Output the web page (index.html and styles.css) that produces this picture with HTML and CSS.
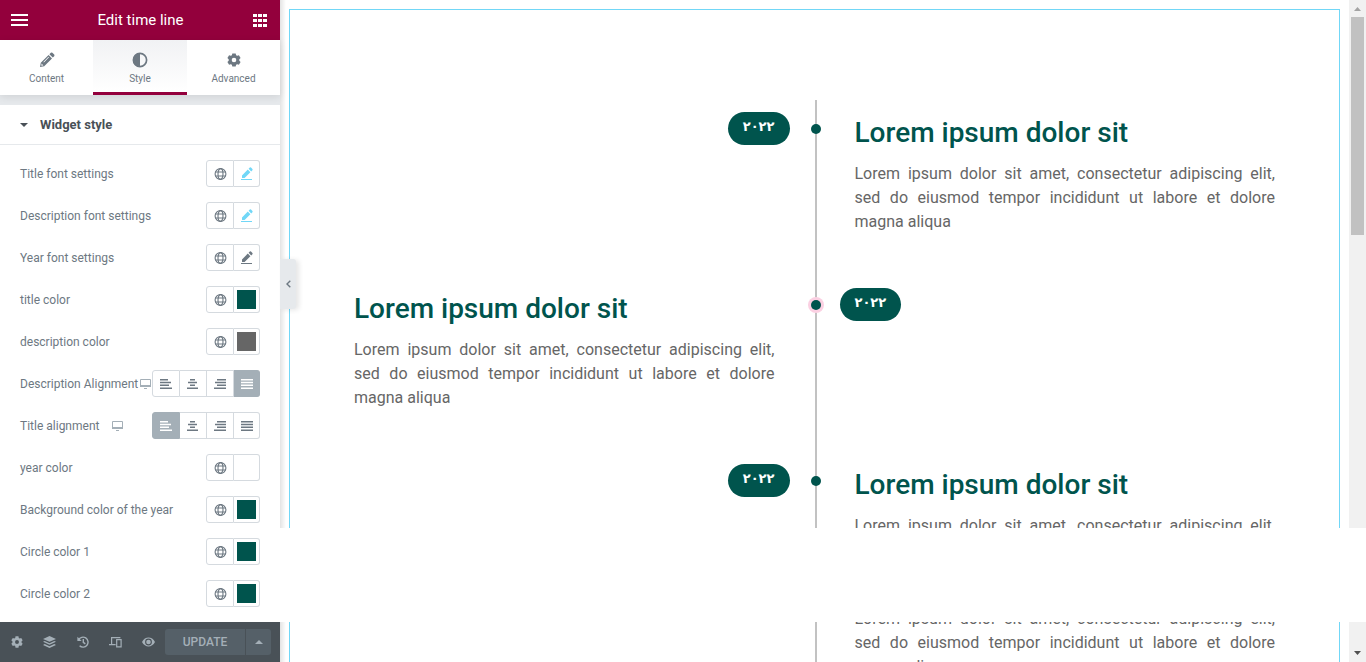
FILE: index.html
```html
<!DOCTYPE html>
<html lang="en">
<head>
<meta charset="utf-8">
<title>Edit time line</title>
<link rel="stylesheet" href="styles.css">
</head>
<body>
<svg class="sprite" aria-hidden="true">
  <symbol id="globe" viewBox="0 0 13 12"><g fill="none" stroke="currentColor" stroke-width="1.100"><circle cx="6.500" cy="6" r="5.400"/><ellipse cx="6.500" cy="6" rx="2.500" ry="5.400"/><path d="M1.300 4h10.400M1.300 8h10.400"/></g></symbol>
  <symbol id="edit" viewBox="0 0 12 14"><path fill="currentColor" d="M1 11V8.400L6.800 2.600 9.400 5.200 3.600 11zM7.600 1.800 8.800.6q.6-.5 1.200 0L11.400 2q.5.600 0 1.200L10.200 4.400zM0 12h11v1H0z"/></symbol>
  <symbol id="screen" viewBox="0 0 13 11"><path fill="none" stroke="currentColor" d="M1.500 1.500h10v6h-10z"/><path fill="currentColor" d="M1 7h11v2H1zM5 10h3v1H5z"/></symbol>
  <symbol id="left" viewBox="0 0 12 10"><path fill="currentColor" d="M0 0h8v1.400H0zM0 2.800h11v1.400H0zM0 5.600h9v1.400H0zM0 8.500h12v1.400H0z"/></symbol>
  <symbol id="center" viewBox="0 0 12 10"><path fill="currentColor" d="M3 0h5v1.400H3zM1 2.800h9v1.400H1zM3 5.600h5v1.400H3zM0 8.500h11v1.400H0z"/></symbol>
  <symbol id="right" viewBox="0 0 12 10"><path fill="currentColor" d="M3 0h9v1.400H3zM1 2.800h11v1.400H1zM3 5.600h9v1.400H3zM0 8.500h12v1.400H0z"/></symbol>
  <symbol id="justify" viewBox="0 0 12 10"><path fill="currentColor" d="M0 0h12v1.400H0zM0 2.800h12v1.400H0zM0 5.600h12v1.400H0zM0 8.500h12v1.400H0z"/></symbol>
  <symbol id="gear" viewBox="0 0 14 14"><path fill="currentColor" fill-rule="evenodd" d="M5.300.4h3.400l.4 1.800 1.100.6 1.700-.6 1.700 2.900-1.300 1.200v1.400l1.300 1.200-1.700 2.900-1.700-.6-1.100.6-.4 1.800H5.300l-.4-1.800-1.100-.6-1.700.6L.4 8.900l1.300-1.200V6.300L.4 5.100l1.700-2.900 1.700.6 1.100-.6zM7 4.700a2.300 2.300 0 1 0 0 4.600 2.300 2.300 0 0 0 0-4.600z"/></symbol>
</svg>

<div class="editor">
  <aside class="panel">
    <header class="panel-header">
      <button class="bare" aria-label="Menu"><svg width="17" height="12" viewBox="0 0 17 12"><path fill="#fff" d="M0 0h17v2H0zM0 5h17v2H0zM0 10h17v2H0z"/></svg></button>
      <h1 class="panel-title">Edit time line</h1>
      <button class="bare" aria-label="Widgets"><svg width="14" height="13" viewBox="0 0 14 13"><path fill="#fff" d="M0 0h4v3H0zM5 0h4v3H5zM10 0h4v3h-4zM0 5h4v3H0zM5 5h4v3H5zM10 5h4v3h-4zM0 10h4v3H0zM5 10h4v3H5zM10 10h4v3h-4z"/></svg></button>
    </header>

    <nav class="tabs">
      <button class="tab"><svg width="16" height="16" viewBox="0 0 16 16"><path fill="currentColor" fill-rule="evenodd" d="M1 15l.8-4.200L9.600 3l3.400 3.400-7.800 7.800zM10.400 2.200 11.800.8q.8-.6 1.600 0L15.200 2.600q.6.800 0 1.600L13.800 5.600zM2.600 11.600l-.3 2.100 2.100-.3zM9.500 4.800 4.400 9.900l.5.5L10 5.300z"/></svg>Content</button>
      <button class="tab tab-active"><svg width="16" height="16" viewBox="0 0 16 16"><circle cx="8" cy="8" r="6.600" fill="none" stroke="currentColor" stroke-width="1.700"/><path fill="currentColor" d="M8 1v14A7 7 0 0 1 8 1z"/></svg>Style</button>
      <button class="tab"><svg width="16" height="16" viewBox="-1 -1 16 16"><use href="#gear" width="14" height="14"/></svg>Advanced</button>
    </nav>

    <section class="section">
      <button class="section-head"><svg width="8" height="4" viewBox="0 0 8 4"><path fill="currentColor" d="M0 0h8L4 4z"/></svg>Widget style</button>
      <div class="controls">
        <div class="row"><span class="label">Title font settings</span><div class="group"><button class="cell" aria-label="Global font"><svg class="globe"><use href="#globe"/></svg></button><button class="cell changed" aria-label="Edit title font"><svg class="pen"><use href="#edit"/></svg></button></div></div>
        <div class="row"><span class="label">Description font settings</span><div class="group"><button class="cell" aria-label="Global font"><svg class="globe"><use href="#globe"/></svg></button><button class="cell changed" aria-label="Edit description font"><svg class="pen"><use href="#edit"/></svg></button></div></div>
        <div class="row"><span class="label">Year font settings</span><div class="group"><button class="cell" aria-label="Global font"><svg class="globe"><use href="#globe"/></svg></button><button class="cell" aria-label="Edit year font"><svg class="pen"><use href="#edit"/></svg></button></div></div>
        <div class="row"><span class="label">title color</span><div class="group"><button class="cell" aria-label="Global color"><svg class="globe"><use href="#globe"/></svg></button><button class="cell" aria-label="Pick title color"><span class="swatch green"></span></button></div></div>
        <div class="row"><span class="label">description color</span><div class="group"><button class="cell" aria-label="Global color"><svg class="globe"><use href="#globe"/></svg></button><button class="cell" aria-label="Pick description color"><span class="swatch gray"></span></button></div></div>
        <div class="row"><span class="label">Description Alignment</span><button class="bare device" aria-label="Desktop"><svg width="13" height="11"><use href="#screen"/></svg></button><div class="group">
          <label class="cell"><input type="radio" name="desc" aria-label="Left"><svg class="lines"><use href="#left"/></svg></label>
          <label class="cell"><input type="radio" name="desc" aria-label="Center"><svg class="lines"><use href="#center"/></svg></label>
          <label class="cell"><input type="radio" name="desc" aria-label="Right"><svg class="lines"><use href="#right"/></svg></label>
          <label class="cell"><input type="radio" name="desc" aria-label="Justify" checked><svg class="lines"><use href="#justify"/></svg></label></div></div>
        <div class="row"><span class="label">Title alignment</span><button class="bare device" aria-label="Desktop"><svg width="13" height="11"><use href="#screen"/></svg></button><div class="group">
          <label class="cell"><input type="radio" name="title" aria-label="Left" checked><svg class="lines"><use href="#left"/></svg></label>
          <label class="cell"><input type="radio" name="title" aria-label="Center"><svg class="lines"><use href="#center"/></svg></label>
          <label class="cell"><input type="radio" name="title" aria-label="Right"><svg class="lines"><use href="#right"/></svg></label>
          <label class="cell"><input type="radio" name="title" aria-label="Justify"><svg class="lines"><use href="#justify"/></svg></label></div></div>
        <div class="row"><span class="label">year color</span><div class="group"><button class="cell" aria-label="Global color"><svg class="globe"><use href="#globe"/></svg></button><button class="cell" aria-label="Pick year color"><span class="swatch"></span></button></div></div>
        <div class="row"><span class="label">Background color of the year</span><div class="group"><button class="cell" aria-label="Global color"><svg class="globe"><use href="#globe"/></svg></button><button class="cell" aria-label="Pick year background"><span class="swatch green"></span></button></div></div>
        <div class="row"><span class="label">Circle color 1</span><div class="group"><button class="cell" aria-label="Global color"><svg class="globe"><use href="#globe"/></svg></button><button class="cell" aria-label="Pick circle color 1"><span class="swatch green"></span></button></div></div>
        <div class="row"><span class="label">Circle color 2</span><div class="group"><button class="cell" aria-label="Global color"><svg class="globe"><use href="#globe"/></svg></button><button class="cell" aria-label="Pick circle color 2"><span class="swatch green"></span></button></div></div>
      </div>
    </section>

    <footer class="panel-footer">
      <button class="bare tool" aria-label="Settings"><svg width="12" height="12"><use href="#gear"/></svg></button>
      <button class="bare tool" aria-label="Navigator"><svg width="13" height="12" viewBox="0 0 13 12"><path fill="currentColor" d="M6.500 0 13 2.900 6.500 5.800 0 2.900zM0 5.800l1.700-.8 4.800 2.200L11.300 5l1.700.8-6.500 3zM0 8.900l1.700-.8 4.800 2.200 4.800-2.200 1.700.8-6.500 3z"/></svg></button>
      <button class="bare tool" aria-label="History"><svg width="12" height="12" viewBox="0 0 12 12"><path fill="none" stroke="currentColor" stroke-width="1.400" d="M1.600 3.800A5 5 0 1 1 2.600 9.800M6.300 3v3.300l2 1.600"/><path fill="currentColor" d="M.4.800v4.300h4.300z"/></svg></button>
      <button class="bare tool" aria-label="Responsive mode"><svg width="13" height="12" viewBox="0 0 13 12"><path fill="none" stroke="currentColor" stroke-width="1.200" d="M2.600 8V1.600h8.800M0 8.700h6.600M7.700 3.600h4.400v7.200H7.700z"/></svg></button>
      <button class="bare tool" aria-label="Preview"><svg width="13" height="10" viewBox="0 0 13 10"><path fill="currentColor" fill-rule="evenodd" d="M0 5C3-.900 10-.900 13 5 10 10.900 3 10.900 0 5zM6.500 1.600a3.400 3.400 0 1 0 0 6.800 3.400 3.400 0 0 0 0-6.800z"/><circle cx="6.500" cy="5" r="2.300" fill="currentColor"/></svg></button>
      <div class="publish">
        <button class="update">UPDATE</button>
        <button class="more" aria-label="Save options"><svg width="8" height="4" viewBox="0 0 8 4"><path fill="currentColor" d="M4 0l4 4H0z"/></svg></button>
      </div>
    </footer>
  </aside>

  <main class="preview">
    <div class="pane pane-top">
      <div class="page">
        <div class="timeline">
          <article class="item">
            <div class="side side-year"><span class="year">۲۰۲۲</span></div>
            <div class="side"><h2 class="title">Lorem ipsum dolor sit</h2><p class="desc">Lorem ipsum dolor sit amet, consectetur adipiscing elit, sed do eiusmod tempor incididunt ut labore et dolore magna aliqua</p></div>
            <span class="dot"></span>
          </article>
          <article class="item flip">
            <div class="side"><h2 class="title">Lorem ipsum dolor sit</h2><p class="desc">Lorem ipsum dolor sit amet, consectetur adipiscing elit, sed do eiusmod tempor incididunt ut labore et dolore magna aliqua</p></div>
            <div class="side side-year"><span class="year">۲۰۲۲</span></div>
            <span class="dot ring"></span>
          </article>
          <article class="item">
            <div class="side side-year"><span class="year">۲۰۲۲</span></div>
            <div class="side"><h2 class="title">Lorem ipsum dolor sit</h2><p class="desc">Lorem ipsum dolor sit amet, consectetur adipiscing elit, sed do eiusmod tempor incididunt ut labore et dolore magna aliqua</p></div>
            <span class="dot"></span>
          </article>
        </div>
      </div>
      <div class="scroll"><svg class="arrow" width="7" height="4" viewBox="0 0 7 4"><path fill="#a3a3a3" d="M3.500 0 7 4H0z"/></svg><div class="thumb"></div></div>
    </div>
    <div class="pane pane-bottom">
      <div class="page">
        <div class="timeline">
          <article class="item">
            <div class="side"></div>
            <div class="side"><p class="desc">Lorem ipsum dolor sit amet, consectetur adipiscing elit, sed do eiusmod tempor incididunt ut labore et dolore magna aliqua</p></div>
          </article>
        </div>
      </div>
      <div class="scroll scroll-end"><svg class="arrow" width="7" height="4" viewBox="0 0 7 4"><path fill="#505050" d="M0 0h7L3.500 4z"/></svg></div>
    </div>
  </main>
  <button class="collapse" aria-label="Hide panel"><svg width="5" height="8" viewBox="0 0 5 8"><path fill="none" stroke="currentColor" stroke-width="1.400" d="M4.300.8 1 4l3.300 3.200"/></svg></button>
</div>
</body>
</html>
```
FILE: styles.css
```css
* { box-sizing: border-box; }

body {
  margin: 0;
  background: #fff;
  font-family: Roboto, "Liberation Sans", sans-serif;
  color: #6d7882;
}

button {
  margin: 0;
  padding: 0;
  border: 0;
  background: none;
  color: inherit;
  font: inherit;
}

h1, h2, p { margin: 0; }
svg { display: block; flex: none; }
.sprite { position: absolute; width: 0; height: 0; }
.bare { display: flex; align-items: center; justify-content: center; }

.editor {
  position: relative;
  display: flex;
  height: 100vh;
  overflow: hidden;
}

/* Panel */
.panel {
  display: flex;
  flex-direction: column;
  flex: 0 0 280px;
  background: #fff;
}

.panel-header {
  display: flex;
  align-items: center;
  justify-content: space-between;
  height: 40px;
  padding: 0 13px 0 11px;
  background: #93003c;
}

.panel-title {
  color: #fff;
  font-size: 15px;
  font-weight: 400;
}

.tabs {
  z-index: 1;
  display: grid;
  grid-template-columns: 93px 94px 93px;
  height: 55px;
  background: #fff;
  box-shadow: 0 2px 8px rgba(0, 0, 0, 0.1);
}

.tab {
  display: flex;
  flex-direction: column;
  align-items: center;
  gap: 5px;
  padding-top: 12px;
  border-bottom: 3px solid transparent;
  font-size: 10px;
  line-height: 12px;
}

.tab-active {
  border-bottom-color: #93003c;
  background: linear-gradient(#f1f2f4, #fff);
}

.section {
  flex: 1;
  min-height: 0;
  overflow: hidden;
  border-top: 10px solid #e6e9ec;
}

.section-head {
  display: flex;
  align-items: center;
  gap: 12px;
  width: 100%;
  height: 40px;
  padding-left: 20px;
  border-bottom: 1px solid #e6e9ec;
  color: #495157;
  font-size: 13px;
  font-weight: 700;
}

.controls {
  display: flex;
  flex-direction: column;
  gap: 15px;
  padding: 15px 20px;
}

.row {
  display: flex;
  align-items: center;
  height: 27px;
  font-size: 12px;
}

.label { flex: none; }
.device { flex: 0 1 36px; min-width: 0; color: #a4afb7; }

.group {
  display: flex;
  flex: none;
  margin-left: auto;
  height: 27px;
}

.cell {
  position: relative;
  display: flex;
  align-items: center;
  justify-content: center;
  width: 27px;
  border: 1px solid #d5dadf;
  border-left-width: 0;
}

.cell:first-child {
  border-left-width: 1px;
  border-radius: 3px 0 0 3px;
  width: 28px;
}

.cell:last-child { border-radius: 0 3px 3px 0; width: 26px; }
.cell input { position: absolute; inset: 0; margin: 0; opacity: 0; }
.cell:has(:checked) { background: #a4afb7; border-color: #a4afb7; color: #fff; }
.changed { color: #71d7f7; }
.globe { width: 13px; height: 12px; }
.pen { width: 12px; height: 14px; }
.lines { width: 12px; height: 10px; }
.swatch { width: 19px; height: 19px; background: #fff; }
.green { background: #00544d; }
.gray { background: #666; }

.panel-footer {
  display: flex;
  align-items: center;
  height: 40px;
  background: #495157;
  color: #a4afb7;
}

.tool { width: 33px; height: 40px; }

.publish {
  display: flex;
  gap: 1px;
  height: 26px;
  font-size: 12px;
  font-weight: 500;
}

.update { width: 80px; background: #556068; border-radius: 3px 0 0 3px; }

.more {
  display: flex;
  align-items: center;
  justify-content: center;
  width: 25px;
  background: #556068;
  border-radius: 0 3px 3px 0;
}

.collapse {
  position: absolute;
  top: 259px;
  left: 280px;
  display: flex;
  align-items: center;
  justify-content: center;
  width: 16px;
  height: 50px;
  background: #e6e9ec;
  border-radius: 0 3px 3px 0;
  box-shadow: 3px 1px 5px rgba(0, 0, 0, 0.1);
}

/* Preview */
.preview {
  display: flex;
  flex-direction: column;
  gap: 94px;
  flex: 1;
  min-width: 0;
}

.pane {
  display: flex;
  min-height: 0;
  overflow: hidden;
  padding-left: 9px;
  background: linear-gradient(90deg, #e4e4e4, #fff 6px);
}

.pane-top { flex: 1; }
.pane-bottom { flex: 0 0 40px; }

.page {
  flex: 1;
  margin-right: 9px;
  padding: 0 64px;
  border: solid #71d7f7;
  border-width: 0 1px;
}

.pane-top .page {
  margin-top: 9px;
  padding-top: 90px;
  border-top-width: 1px;
}

.timeline {
  background: linear-gradient(#c2c2c2, #c2c2c2) calc(50% + 1px) 0 / 2px 100% no-repeat;
}

.item {
  position: relative;
  display: grid;
  grid-template-columns: 1fr 1fr;
  height: 176px;
}

.side { padding: 15px 0 0 40px; }
.flip .side { padding: 15px 40px 0 0; }
.side-year { padding: 12px 25px 0 0; text-align: right; }
.flip .side-year { padding: 12px 0 0 25px; text-align: left; }

.year {
  display: inline-block;
  height: 33px;
  padding: 0 15px;
  border-radius: 17px;
  background: #00544d;
  color: #fff;
  font-family: "DejaVu Sans", sans-serif;
  font-size: 13px;
  font-weight: 700;
  line-height: 30px;
}

.title {
  margin-bottom: 11px;
  color: #00544d;
  font-size: 28px;
  font-weight: 500;
  line-height: 36px;
}

.desc {
  color: #666;
  font-size: 16px;
  line-height: 24px;
  text-align: justify;
}

.pane-bottom .side { padding-top: 0; }
.pane-bottom .desc { margin-top: -15px; }

.dot {
  position: absolute;
  top: 24px;
  left: calc(50% - 4px);
  width: 10px;
  height: 10px;
  border-radius: 50%;
  background: #00544d;
}

.ring { box-shadow: 0 0 0 3px #fbd0e2; }

.scroll {
  display: flex;
  flex-direction: column;
  align-items: center;
  flex: 0 0 17px;
  gap: 6px;
  padding-top: 7px;
  background: #f1f1f1;
}

.scroll-end { justify-content: flex-end; padding-bottom: 7px; }
.thumb { width: 13px; height: 218px; background: #c1c1c1; }
```
